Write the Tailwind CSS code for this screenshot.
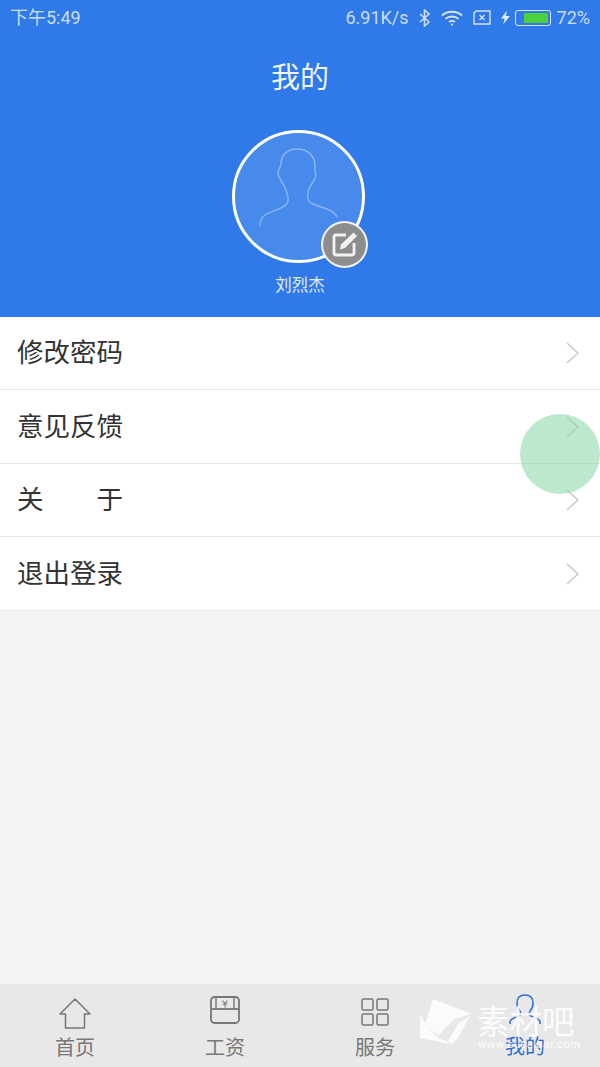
<!DOCTYPE html>
<html lang="zh">
<head>
  <meta charset="UTF-8">
  <title>我的</title>
  <script src="https://cdn.jsdelivr.net/npm/@tailwindcss/browser@4"></script>
</head>
<body class="bg-[#f4f4f4] font-['Roboto','Noto_Sans_CJK_SC',sans-serif]">
<div class="relative w-[600px] h-[1067px] overflow-hidden flex flex-col">

  <!-- status bar + header -->
  <header class="bg-[#2f79e8] h-[317px] shrink-0 flex flex-col">
    <div class="h-[35px] px-[10px] flex items-center justify-between text-[18px] text-white/75">
      <span>下午5:49</span>
      <div class="flex items-center">
        <span>6.91K/s</span>
        <svg class="ml-[10px]" width="12" height="18" viewBox="0 0 12 18" fill="none" stroke="#fff" stroke-opacity=".75" stroke-width="1.6"><path d="M1 5l9 8-4.500 4V1L10 5l-9 8"/></svg>
        <svg class="ml-[10px]" width="22" height="16" viewBox="0 0 22 16" fill="none" stroke="#fff" stroke-opacity=".8" stroke-width="2"><path d="M1 5.500C6.500 .5 15.500 .5 21 5.500M4.500 8.800c3.600-3.200 9.400-3.200 13 0M8 12c1.800-1.500 4.200-1.500 6 0"/><circle cx="11" cy="14.500" r="1" fill="#fff" stroke="none"/></svg>
        <svg class="ml-[10px]" width="18" height="15" viewBox="0 0 18 15" fill="none" stroke="#fff" stroke-opacity=".8" stroke-width="1.400"><path d="M3 1h14v13H1V3z"/><path d="M6.500 5l5 5M11.500 5l-5 5"/></svg>
        <svg class="ml-[10px]" width="9" height="15" viewBox="0 0 10 15" fill="#fff" fill-opacity=".85"><path d="M6.500 0L0 8.500h4L2.500 15 10 5.800H5.500z"/></svg>
        <div class="ml-[5px] w-[36px] h-[16px] rounded-[3px] border border-white/80 p-[2px] flex justify-end">
          <div class="w-[24px] bg-[#4cd13c] rounded-[1px]"></div>
        </div>
        <span class="ml-[6px]">72%</span>
      </div>
    </div>
    <h1 class="mt-[24px] text-center text-[29px] leading-[38px] text-white/95">我的</h1>
    <div class="relative mt-[33px] ml-[232px] w-[133px] h-[133px] rounded-full border-[3px] border-white bg-[#488aec]">
      <svg class="absolute left-0 top-0" width="127" height="127" viewBox="0 0 127 127" fill="none" stroke="#fff" stroke-opacity=".35" stroke-width="1.500">
        <path d="M25 93c0-5 2-9 5-11 7-5 21-6 23-14 1-5-2-9-3-14-2-3-7-9-7-15 0-3 3-4 3-8 0-9 6-15 16-15s17 6 18 15v8c1 2 1 4 0 6-2 5-6 9-7 14-1 5 0 9 3 11 7 4 18 5 23 10 2 2 3 3 3 4"/>
      </svg>
      <div class="absolute left-[86px] top-[88px] w-[47px] h-[47px] rounded-full border-[2px] border-white/90 bg-[#8d8d8d] flex items-center justify-center">
        <svg width="27" height="27" viewBox="0 0 27 27" fill="none">
          <path d="M15 4H5a2 2 0 0 0-2 2v16a2 2 0 0 0 2 2h16a2 2 0 0 0 2-2V12" stroke="#f2f2f2" stroke-width="2.800"/>
          <path d="M22.500 1.500l3.500 3.500L14 17l-5 1.500 1-5z" fill="#f2f2f2"/>
        </svg>
      </div>
    </div>
    <p class="mt-[13px] text-center text-[16.500px] leading-[20px] text-white/85">刘烈杰</p>
  </header>

  <!-- menu -->
  <ul class="bg-white text-[26.500px] text-[#333] shrink-0">
    <li class="h-[73px] pl-[17px] pr-[20px] flex items-center justify-between border-b border-[#e8e8e8]">
      <span>修改密码</span>
      <svg width="15" height="24" viewBox="0 0 15 24" fill="none" stroke="#c9c9c9" stroke-width="1.500"><path d="M2 2l11 10L2 22"/></svg>
    </li>
    <li class="h-[74px] pl-[17px] pr-[20px] flex items-center justify-between border-b border-[#e8e8e8]">
      <span>意见反馈</span>
      <svg width="15" height="24" viewBox="0 0 15 24" fill="none" stroke="#c9c9c9" stroke-width="1.500"><path d="M2 2l11 10L2 22"/></svg>
    </li>
    <li class="h-[73px] pl-[17px] pr-[20px] flex items-center justify-between border-b border-[#e8e8e8]">
      <span class="w-[106px] flex justify-between"><span>关</span><span>于</span></span>
      <svg width="15" height="24" viewBox="0 0 15 24" fill="none" stroke="#c9c9c9" stroke-width="1.500"><path d="M2 2l11 10L2 22"/></svg>
    </li>
    <li class="h-[74px] pl-[17px] pr-[20px] flex items-center justify-between border-b border-[#e8e8e8]">
      <span>退出登录</span>
      <svg width="15" height="24" viewBox="0 0 15 24" fill="none" stroke="#c9c9c9" stroke-width="1.500"><path d="M2 2l11 10L2 22"/></svg>
    </li>
  </ul>

  <div class="flex-1"></div>

  <!-- tab bar -->
  <nav class="relative h-[83px] shrink-0 bg-[#e8e8e8] grid grid-cols-4 text-[20px] leading-[26px] text-[#777]">
    <div class="flex flex-col items-center pt-[14px]">
      <svg width="32" height="31" viewBox="0 0 32 31" fill="none" stroke="#777" stroke-width="1.500"><path d="M16 1L1 16h5.500v14h19V16H31z" stroke-linejoin="round"/></svg>
      <span class="mt-[6px]">首页</span>
    </div>
    <div class="flex flex-col items-center pt-[10px]">
      <svg width="30" height="30" viewBox="0 0 30 30" fill="none" stroke="#777" stroke-width="1.800"><rect x="1" y="3" width="28" height="26" rx="3.500"/><path d="M1 15h28"/><path d="M6 15V3M24 15V3" stroke-width="1.400"/><path d="M12.500 6.500L15 9.500l2.500-3M12.500 10h5M15 9.500v4" stroke-width="1.100"/></svg>
      <span class="mt-[11px]">工资</span>
    </div>
    <div class="flex flex-col items-center pt-[14px]">
      <svg width="28" height="28" viewBox="0 0 28 28" fill="none" stroke="#777" stroke-width="1.500"><rect x="1" y="1" width="11" height="11" rx="1.500"/><rect x="16" y="1" width="11" height="11" rx="1.500"/><rect x="1" y="16" width="11" height="11" rx="1.500"/><rect x="16" y="16" width="11" height="11" rx="1.500"/></svg>
      <span class="mt-[9px]">服务</span>
    </div>
    <div class="flex flex-col items-center pt-[10px] text-[#2f6fd0]">
      <svg width="32" height="31" viewBox="0 0 32 31" fill="none" stroke="#2f6fd0" stroke-width="1.500"><path d="M1 30v-2c0-3 4-4 9-6 2-1 2-3 1-5-2-2-3-5-3-8 0-5 3-8 8-8s8 3 8 8c0 3-1 6-3 8-1 2-1 4 1 5 5 2 9 3 9 6v2"/></svg>
      <span class="mt-[9px]">我的</span>
    </div>

    <!-- watermark -->
    <div class="absolute left-[420px] top-[13px] w-[160px] h-[60px] text-white/85">
      <svg class="absolute left-0 top-0" width="52" height="50" viewBox="0 0 52 50" fill="#fff" fill-opacity=".8"><path d="M13 2L52 17 35 22 25 31 18 39 5 27z"/><path d="M0 17L7 29 18 41 27 44 30 47 0 41z"/><path d="M28 44L38 27 50 19 38 41 32 47z"/></svg>
      <span class="absolute left-[57px] top-[6px] text-[32.500px] leading-[40px] whitespace-nowrap">素材吧</span>
      <span class="absolute left-[58px] top-[41px] text-[11px] leading-[14px] whitespace-nowrap tracking-[0.6px]">www.sucaibar.com</span>
    </div>
  </nav>

  <!-- floating ball -->
  <div class="absolute left-[520px] top-[414px] w-[80px] h-[80px] rounded-full bg-[#8fd9ac]/60"></div>
</div>
</body>
</html>
